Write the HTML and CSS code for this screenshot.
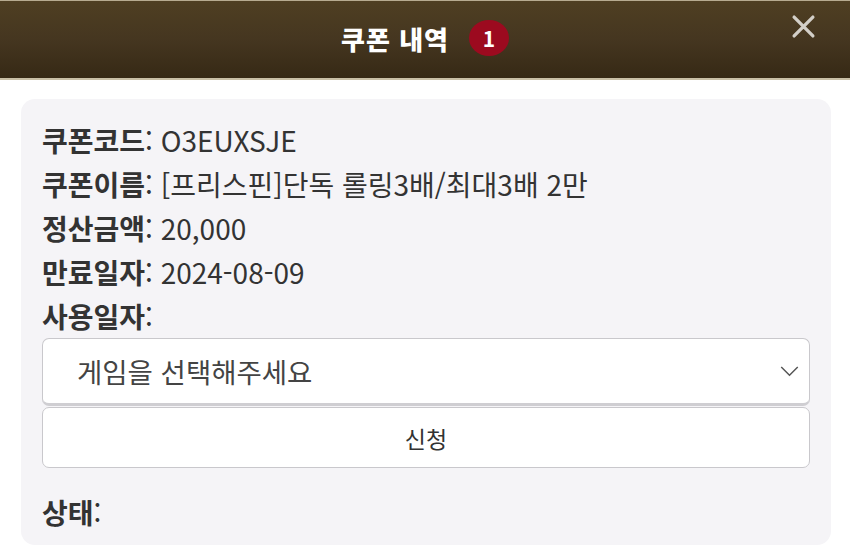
FILE: index.html
```html
<!DOCTYPE html>
<html lang="ko">
<head>
<meta charset="utf-8">
<title>쿠폰 내역</title>
<link rel="stylesheet" href="styles.css">
</head>
<body>
<header class="topbar">
  <h1 class="topbar-title">쿠폰 내역 <span class="count-badge">1</span></h1>
  <button class="close-btn" aria-label="닫기">
    <svg viewBox="0 0 24 24" width="25" height="25"><path d="M3 3 L21 21 M21 3 L3 21" stroke="#d3cfc8" stroke-width="3.2" stroke-linecap="round"/></svg>
  </button>
</header>
<main class="content">
  <section class="coupon-card">
    <p class="row"><b>쿠폰코드</b>: O3EUXSJE</p>
    <p class="row"><b>쿠폰이름</b>: [프리스핀]단독 롤링3배/최대3배 2만</p>
    <p class="row"><b>정산금액</b>: 20,000</p>
    <p class="row"><b>만료일자</b>: 2024-08-09</p>
    <p class="row"><b>사용일자</b>:</p>
    <div class="game-select">
      <span>게임을 선택해주세요</span>
      <svg class="chevron" viewBox="0 0 20 12" width="19" height="11"><path d="M1 1 L10 10 L19 1" fill="none" stroke="#555" stroke-width="1.6"/></svg>
    </div>
    <button class="apply-btn">신청</button>
    <p class="row status"><b>상태</b>:</p>
  </section>
</main>
</body>
</html>
```
FILE: styles.css
```css
* { box-sizing: border-box; }
html, body { margin: 0; padding: 0; }
body {
  width: 850px;
  height: 547px;
  overflow: hidden;
  background: #ffffff;
  font-family: "Noto Sans CJK KR", "Noto Sans", sans-serif;
  color: #333;
}
.topbar {
  position: relative;
  height: 80px;
  border-top: 1px solid #b7ab90;
  border-bottom: 2px solid #c9bfa6;
  background: linear-gradient(180deg, #4f3f22 0%, #453620 50%, #362915 100%);
  display: flex;
  align-items: center;
  justify-content: center;
}
.topbar-title {
  margin: 0 0 3px 0;
  font-size: 26px;
  font-weight: 900;
  color: #ffffff;
  display: flex;
  align-items: center;
  gap: 20px;
  letter-spacing: 1px;
}
.count-badge {
  display: inline-flex;
  align-items: center;
  justify-content: center;
  width: 40px;
  height: 36px;
  border-radius: 50%;
  background: #9c0a1f;
  font-size: 21px;
  font-weight: 700;
  color: #fff;
  letter-spacing: 0;
}
.close-btn {
  position: absolute;
  right: 34px;
  top: 13px;
  border: 0;
  padding: 0;
  background: none;
  display: flex;
}
.content {
  padding: 19px 19px 0 21px;
}
.coupon-card {
  background: #f5f4f7;
  border-radius: 14px;
  padding: 19px 21px 12px 21px;
  height: 446px;
}
.row {
  margin: 0;
  font-size: 28px;
  line-height: 44px;
  color: #333;
}
.row b { font-weight: 700; color: #333; }
.game-select {
  height: 68px;
  background: #fff;
  border: 1px solid #c9c8cc;
  border-bottom: 3px solid #cfced2;
  border-radius: 7px;
  display: flex;
  align-items: center;
  justify-content: space-between;
  padding: 0 10px 0 34px;
  font-size: 27.5px;
  color: #444;
}
.apply-btn {
  display: block;
  width: 100%;
  height: 61px;
  margin-top: 1px;
  background: #fff;
  border: 1px solid #c9c8cc;
  border-radius: 7px;
  font-family: inherit;
  font-size: 23px;
  color: #333;
}
.status { margin-top: 22px; }
```
